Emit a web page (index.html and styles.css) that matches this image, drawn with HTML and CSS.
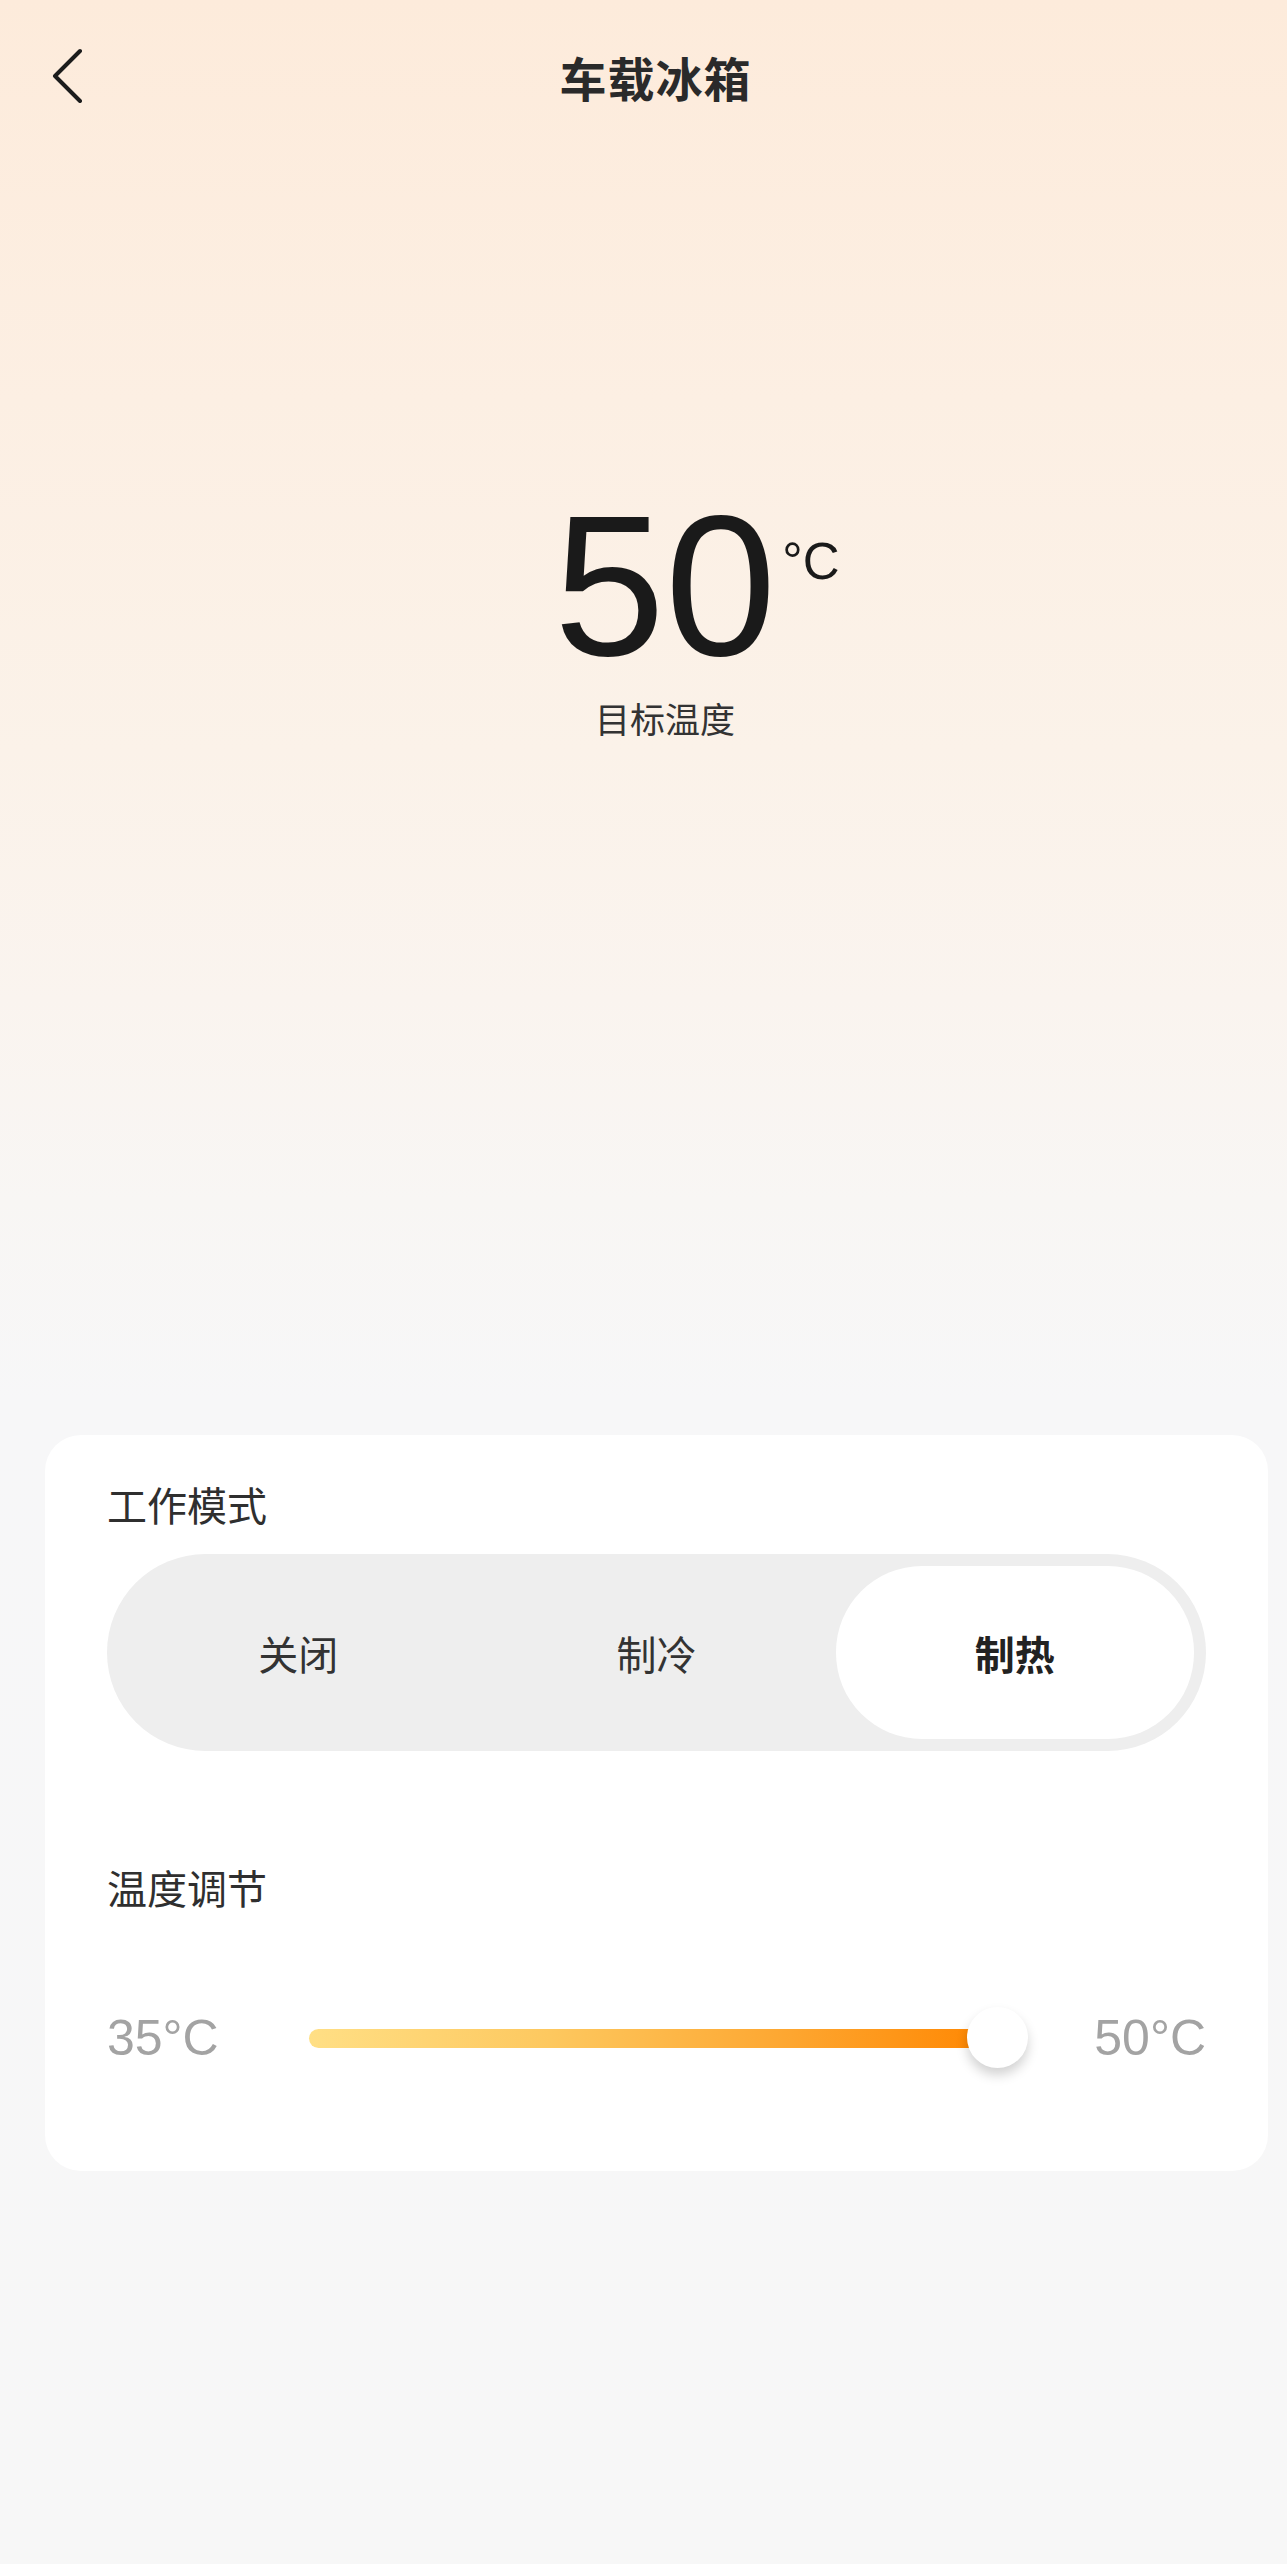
FILE: index.html
```html
<!DOCTYPE html>
<html lang="zh-CN">
<head>
<meta charset="utf-8">
<title>车载冰箱</title>
<link rel="stylesheet" href="styles.css">
</head>
<body>
<div class="page">
  <header class="header">
    <button class="back" aria-label="返回">
      <svg width="40" height="60" viewBox="0 0 40 60"><path d="M31 8 L6 33 L31 58" fill="none" stroke="#1c1c1c" stroke-width="4" stroke-linecap="round" stroke-linejoin="round"/></svg>
    </button>
    <h1 class="title">车载冰箱</h1>
    <div class="spacer"></div>
  </header>

  <section class="hero">
    <div class="temp"><span class="temp-num">50</span><span class="temp-unit">°C</span></div>
    <div class="temp-label">目标温度</div>
  </section>

  <section class="card">
    <div class="section-title">工作模式</div>
    <div class="segment">
      <div class="seg-item">关闭</div>
      <div class="seg-item">制冷</div>
      <div class="seg-item active">制热</div>
    </div>

    <div class="section-title second">温度调节</div>
    <div class="slider-row">
      <span class="range-label">35°C</span>
      <div class="slider">
        <div class="track"></div>
        <div class="thumb"></div>
      </div>
      <span class="range-label">50°C</span>
    </div>
  </section>
</div>
</body>
</html>
```
FILE: styles.css
```css
html, body {
  margin: 0;
  padding: 0;
}
body {
  width: 1287px;
  min-height: 2564px;
  font-family: "Noto Sans CJK SC", "Noto Sans", sans-serif;
  color: #333;
  background: linear-gradient(180deg, #fdebdb 0px, #fcefe3 400px, #fbf2e9 750px, #faf4ef 1000px, #f8f6f4 1200px, #f7f7f8 1400px, #f7f7f7 2564px);
}
.page {
  min-height: 2564px;
}
.header {
  height: 150px;
  display: flex;
  align-items: center;
  padding-left: 49px;
}
.back {
  width: 53px;
  height: 80px;
  padding: 0;
  margin: 0;
  border: 0;
  background: none;
  display: flex;
  align-items: center;
  justify-content: flex-start;
  margin-top: -4px;
}
.back svg {
  display: block;
}
.title {
  flex: 1;
  margin: 0;
  text-align: center;
  font-size: 47px;
  font-weight: 700;
  color: #2a2a2a;
  line-height: 1;
  letter-spacing: 1px;
  padding-top: 2px;
}
.spacer {
  width: 78px;
}
.hero {
  padding-top: 336px;
  padding-left: 43px;
  display: flex;
  flex-direction: column;
  align-items: center;
}
.temp {
  position: relative;
  line-height: 1;
}
.temp-num {
  font-family: "Liberation Sans", Arial, sans-serif;
  font-size: 200px;
  line-height: 200px;
  color: #1a1a1a;
  display: block;
}
.temp-unit {
  position: absolute;
  left: 100%;
  top: 50px;
  margin-left: 6px;
  font-family: "Liberation Sans", Arial, sans-serif;
  font-size: 51px;
  line-height: 51px;
  color: #1a1a1a;
  white-space: nowrap;
}
.temp-label {
  margin-top: 12px;
  font-size: 35px;
  line-height: 40px;
  color: #333;
}
.card {
  margin: 697px 19px 0 45px;
  background: #fff;
  border-radius: 36px;
  padding: 47px 62px 102px 62px;
}
.section-title {
  font-size: 40px;
  line-height: 44px;
  color: #2f2f2f;
}
.section-title.second {
  margin-top: 114px;
}
.segment {
  margin-top: 28px;
  height: 197px;
  box-sizing: border-box;
  padding: 12px;
  background: #eeeeee;
  border-radius: 99px;
  display: grid;
  grid-template-columns: 1fr 1fr 1fr;
}
.seg-item {
  display: flex;
  align-items: center;
  justify-content: center;
  font-size: 40px;
  color: #333;
  border-radius: 86px;
}
.seg-item.active {
  background: #fff;
  font-weight: 700;
  color: #222;
}
.slider-row {
  margin-top: 98px;
  height: 62px;
  display: flex;
  align-items: center;
}
.range-label {
  font-family: "Liberation Sans", Arial, sans-serif;
  font-size: 50px;
  color: #a3a3a3;
  line-height: 1;
  white-space: nowrap;
}
.slider {
  flex: 1;
  margin: 0 66px 0 90px;
  height: 62px;
  position: relative;
  display: flex;
  align-items: center;
}
.track {
  width: calc(100% - 31px);
  height: 19px;
  border-radius: 10px;
  background: linear-gradient(90deg, #ffdf85 0%, #fdc85f 35%, #fda630 70%, #ff8600 100%);
}
.thumb {
  position: absolute;
  right: 0;
  top: 0;
  width: 61px;
  height: 61px;
  border-radius: 50%;
  background: #fff;
  box-shadow: 0 7px 12px rgba(0, 0, 0, 0.18);
}
```
